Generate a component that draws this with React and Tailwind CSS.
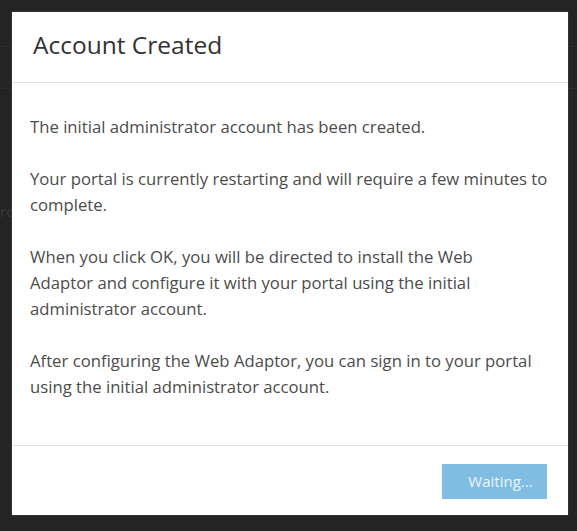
import React from "react";

export default function App() {
  const paragraphs = [
    { text: "The initial administrator account has been created.", cls: "" },
    { text: "Your portal is currently restarting and will require a few minutes to complete.", cls: "" },
    {
      text: "When you click OK, you will be directed to install the Web Adaptor and configure it with your portal using the initial administrator account.",
      cls: "max-w-[500px]",
    },
    { text: "After configuring the Web Adaptor, you can sign in to your portal using the initial administrator account.", cls: "" },
  ];

  return (
    <div
      className="relative w-[577px] h-[531px] bg-[#242424] overflow-hidden"
      style={{ fontFamily: "'Open Sans', Lato, sans-serif" }}
    >
      {/* faint page content behind the overlay */}
      <div className="absolute left-0 top-[46px] w-full h-px bg-[#2c2c2c]" />
      <div className="absolute left-0 top-[88px] w-full h-px bg-[#2c2c2c]" />
      <div className="absolute left-0 top-[200px] text-[15px] text-[#3a3a3a]">ro</div>

      <div className="absolute left-[12px] top-[12px] w-[556px] h-[503px] bg-white flex flex-col shadow-[0_0_2px_rgba(255,255,255,0.2)]">
        <div className="h-[71px] px-[21px] pb-[3px] flex items-center border-b border-[#e0e0e0]">
          <h1 className="text-[24.5px] text-[#323232] font-normal">Account Created</h1>
        </div>
        <div className="flex-1 pl-[18px] pr-[12px] pt-[31px] text-[16.7px] leading-[26px] text-[#4c4c4c]">
          {paragraphs.map((p, i) => (
            <p key={i} className={`mb-[26px] ${p.cls}`}>{p.text}</p>
          ))}
        </div>
        <div className="h-[70px] border-t border-[#e0e0e0] flex items-center justify-end pr-[21px] pt-px">
          <button className="w-[105px] h-[35px] pl-[12px] bg-[#80bde2] text-[15px] text-[#eef6fb]">
            Waiting...
          </button>
        </div>
      </div>
    </div>
  );
}
